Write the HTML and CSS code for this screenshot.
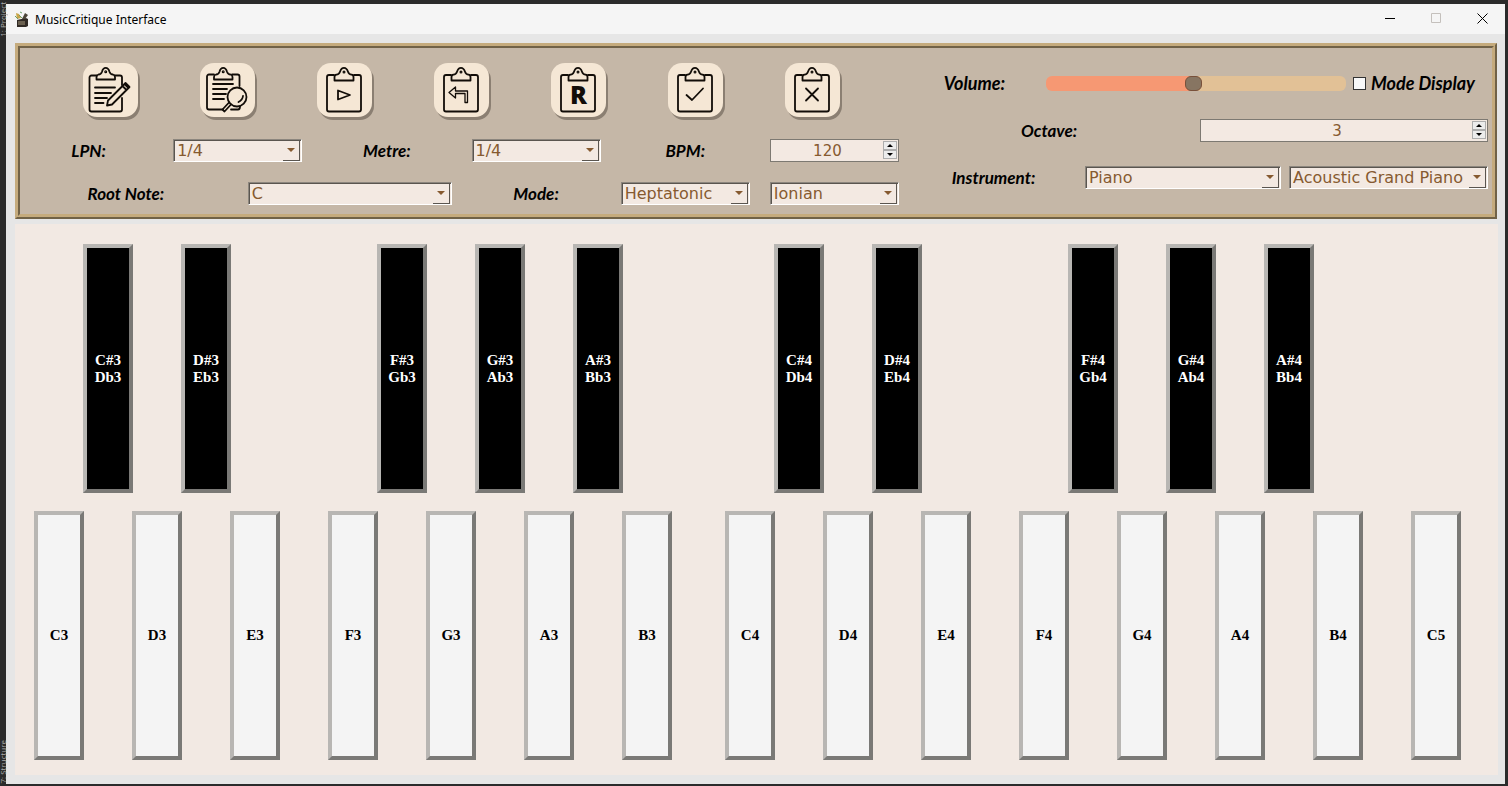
FILE: index.html
```html
<!DOCTYPE html>
<html lang="en">
<head>
  <meta charset="UTF-8" />
  <title>MusicCritique Interface</title>
  <link rel="stylesheet" href="styles.css">
</head>
<body>

  <!-- shared clipboard outline -->
  <svg class="defs" aria-hidden="true">
    <symbol id="clipboard" viewBox="0 0 55 54">
      <path d="M17 12h-5a2 2 0 0 0-2 2v32.500a2 2 0 0 0 2 2h30a2 2 0 0 0 2-2V14a2 2 0 0 0-2-2h-5" />
      <path d="M17.500 17.500V14q0-2 2-2.300q2.500-.2 3.500-3Q24.300 4.800 27 4.800T31 8.700q1 2.800 3.500 3q2 .3 2 2.300v3.500z" />
      <circle cx="27" cy="9" r=".6" />
    </symbol>
  </svg>

  <div class="side side-top">1: Project</div>
  <div class="side side-bottom">7: Structure</div>

  <div class="window">
    <header class="titlebar">
      <svg class="app-icon" viewBox="0 0 16 16">
        <path d="M3 9l9-2 2 1v7l-2 1H3z" fill="#302a25" />
        <path d="M4 11h7M4 13h7" stroke="#a5977c" />
        <path d="M8 8l3-6 3 2-3 4z" fill="#4c4539" />
        <path d="M2 2l3 1 2 4-4 1z" fill="#c9a64b" />
        <path d="M6 1l2 1M1 5l3 3M5 4l3 3" stroke="#6aa06a" />
      </svg>
      <span class="title">MusicCritique Interface</span>
      <button class="win-btn" aria-label="Minimize"><svg viewBox="0 0 11 11"><path d="M0 5.500h10" /></svg></button>
      <button class="win-btn" aria-label="Maximize" disabled><svg viewBox="0 0 11 11"><path d="M.5.5h9v9h-9z" /></svg></button>
      <button class="win-btn" aria-label="Close"><svg viewBox="0 0 11 11"><path d="M.5.5l10 10M10.500.5l-10 10" /></svg></button>
    </header>

    <section class="panel">
      <div class="left">
        <div class="tools">
          <button class="tool" aria-label="Edit">
            <svg viewBox="0 0 55 54">
              <path d="M14 12.500H8.500a2 2 0 0 0-2 2v32a2 2 0 0 0 2 2h28.500a2 2 0 0 0 2-2V35M31.500 12.500H37a2 2 0 0 1 2 2V22" />
              <path d="M13.500 16.500V14q0-2 2-2.500q2.500 0 3.500-2.800Q20 4.800 22.700 4.800T26.500 8.700q1 2.800 3.500 2.800q2 .5 2 2.500v2.500z" />
              <circle cx="22.700" cy="8.700" r=".6" />
              <path d="M12 24.500h20M12 30h16M12 35h12M12 40h8.500" />
              <path d="M25 37.500L42.500 20l4 4L29 41.500l-5 1zM39.500 23l4 4M41.500 21l4 4" />
            </svg>
          </button>
          <button class="tool" aria-label="Preview">
            <svg viewBox="0 0 55 54">
              <path d="M14 11.500H9a2 2 0 0 0-2 2v31a2 2 0 0 0 2 2h14M32 11.500h5.500a2 2 0 0 1 2 2V23M31 46.500h7q2 0 2-3" />
              <path d="M14 16.500V14q0-2 2-2.500q2.500 0 3.500-2.800Q20.500 4.800 23.200 4.800T27 8.700q1 2.800 3.500 2.800q2 .5 2 2.500v2.500z" />
              <circle cx="23.200" cy="8.700" r=".6" />
              <path d="M13 21h20M13 26h14M13 31h13M13 36h11" />
              <circle cx="37" cy="34" r="9.500" />
              <path d="M43 33q-.5 4-4.500 6M31 41.500L24.500 48.500l-2-2L29 39.500" />
            </svg>
          </button>
          <button class="tool" aria-label="Play">
            <svg viewBox="0 0 55 54"><use href="#clipboard" /><path d="M21 27.500l12 4.500-12 4.500z" /></svg>
          </button>
          <button class="tool" aria-label="Undo">
            <svg viewBox="0 0 55 54"><use href="#clipboard" /><path class="thin" d="M15 29.500l6.500-5.500v4h12v11.500h-2.500v-9h-9.500v4.500z" /></svg>
          </button>
          <button class="tool tool-letter" aria-label="Reset">
            <svg viewBox="0 0 55 54"><use href="#clipboard" /></svg><b>R</b>
          </button>
          <button class="tool" aria-label="Accept">
            <svg viewBox="0 0 55 54"><use href="#clipboard" /><path d="M18.500 32l5.500 5 11-11.500" /></svg>
          </button>
          <button class="tool" aria-label="Cancel">
            <svg viewBox="0 0 55 54"><use href="#clipboard" /><path d="M21 25.500l12 12M33 25.500l-12 12" /></svg>
          </button>
        </div>

        <div class="six">
          <label for="lpn">LPN:</label>
          <div class="combo"><select id="lpn"><option>1/4</option></select></div>
          <label for="metre">Metre:</label>
          <div class="combo"><select id="metre"><option>1/4</option></select></div>
          <label for="bpm">BPM:</label>
          <div class="spin">
            <input id="bpm" type="number" value="120">
            <button aria-label="BPM up"></button><button class="down" aria-label="BPM down"></button>
          </div>
        </div>

        <div class="six">
          <div class="root">
            <label for="root">Root Note:</label>
            <div class="combo"><select id="root"><option>C</option></select></div>
          </div>
          <label for="mode">Mode:</label>
          <div class="combo"><select id="mode"><option>Heptatonic</option></select></div>
          <div class="combo"><select aria-label="Scale"><option>Ionian</option></select></div>
        </div>
      </div>

      <div class="right">
        <div class="volume">
          <label for="volume">Volume:</label>
          <input id="volume" type="range" min="0" max="100" value="49">
          <label class="check"><input type="checkbox">Mode Display</label>
        </div>
        <div class="octave-row">
          <label for="octave">Octave:</label>
          <div class="spin">
            <input id="octave" type="number" value="3">
            <button aria-label="Octave up"></button><button class="down" aria-label="Octave down"></button>
          </div>
        </div>
        <div class="instrument">
          <label for="family">Instrument:</label>
          <div class="combo"><select id="family"><option>Piano</option></select></div>
          <div class="combo"><select aria-label="Instrument name"><option>Acoustic Grand Piano</option></select></div>
        </div>
      </div>
    </section>

    <main class="piano">
      <div class="octave first" data-octave="3"></div>
      <div class="octave last" data-octave="4"></div>
    </main>
  </div>

  <script>
    const whites = ['C', 'D', 'E', 'F', 'G', 'A', 'B'];
    const flats = { C: 'D', D: 'E', F: 'G', G: 'A', A: 'B' };

    function addKey(parent, type, text, column) {
      const key = document.createElement('button');
      key.className = 'key ' + type;
      key.innerText = text;
      key.style.gridColumn = column;
      parent.appendChild(key);
    }

    document.querySelectorAll('.octave').forEach(el => {
      const n = Number(el.dataset.octave);
      whites.forEach((note, i) => {
        addKey(el, 'white', note + n, i * 2 + 1);
        if (flats[note]) {
          addKey(el, 'black', note + '#' + n + '\n' + flats[note] + 'b' + n, i * 2 + 2);
        }
      });
      // closing C
      if (el.classList.contains('last')) addKey(el, 'white', 'C' + (n + 1), 15);
    });

    document.querySelectorAll('.spin').forEach(spin => {
      const input = spin.querySelector('input');
      const [up, down] = spin.querySelectorAll('button');
      up.addEventListener('click', () => input.stepUp());
      down.addEventListener('click', () => input.stepDown());
    });

    const volume = document.getElementById('volume');
    function paintVolume() {
      volume.style.setProperty('--value', volume.value + '%');
    }
    volume.addEventListener('input', paintVolume);
    paintVolume();
  </script>
</body>
</html>
```
FILE: styles.css
```css
* {
  box-sizing: border-box;
}
body {
  margin: 0;
  min-height: 100vh;
  padding: 4px 3px 2px 6px;
  display: flex;
  background: #2b2b2b;
  font-family: Lato, sans-serif;
}
button, input, select {
  margin: 0;
  font-family: inherit;
}
.defs {
  position: absolute;
  width: 0;
  height: 0;
}
/* strip of the window behind */
.side {
  position: absolute;
  left: 0;
  writing-mode: vertical-rl;
  transform: rotate(180deg);
  font: 8px/6px "Open Sans", sans-serif;
  color: #aaa;
}
.side-top {
  top: 2px;
}
.side-bottom {
  bottom: 2px;
}
.window {
  flex: 1;
  display: flex;
  flex-direction: column;
  background: #e6e6e6;
}
.titlebar {
  display: flex;
  align-items: center;
  height: 30px;
  padding-left: 8px;
  background: #f5f5f5;
}
.app-icon {
  width: 16px;
  height: 16px;
}
.title {
  flex: 1;
  margin-left: 5px;
  font: 12px "Noto Sans", sans-serif;
  color: #000;
}
.win-btn {
  width: 46px;
  height: 30px;
  padding: 0;
  border: none;
  background: none;
}
.win-btn svg {
  width: 11px;
  height: 11px;
  fill: none;
  stroke: #000;
}
.win-btn:disabled svg {
  stroke: #c4c0bc;
}

/* control panel */
.panel {
  margin: 9px 8px 5px 9px;
  padding: 15px 4px 9px;
  display: grid;
  grid-template-columns: 875fr 578fr;
  gap: 11px;
  border: 5px ridge #c5ab7d;
  background: #c5b7a7;
}
.left {
  display: flex;
  flex-direction: column;
  gap: 20px;
}
.tools {
  display: grid;
  grid-template-columns: repeat(7, 1fr);
  justify-items: center;
  padding: 0 28px 2px;
}
.tool {
  position: relative;
  width: 55px;
  height: 54px;
  padding: 0;
  border: none;
  border-radius: 14px;
  background: #f5e7d5;
  box-shadow: 2px 3px 0 #8b7f72;
}
.tool svg {
  display: block;
  width: 55px;
  height: 54px;
  fill: none;
  stroke: #120d08;
  stroke-width: 1.8;
  stroke-linecap: round;
  stroke-linejoin: round;
}
.tool .thin {
  stroke-width: 1.3;
}
.tool-letter b {
  position: absolute;
  inset: 18px 0 0;
  font: 800 25px/26px "Open Sans", sans-serif;
  color: #120d08;
}
.six {
  display: grid;
  grid-template-columns: repeat(6, minmax(0, 1fr));
  gap: 20px;
}
.root {
  grid-column: span 3;
  display: grid;
  grid-template-columns: 1fr 1fr;
  gap: 20px;
}
label {
  text-align: center;
  font-size: 17px;
  line-height: 23px;
  font-weight: 700;
  font-style: italic;
  color: #000;
  white-space: nowrap;
}
.combo {
  position: relative;
  min-width: 0;
}
.combo select {
  display: block;
  width: 100%;
  height: 23px;
  padding: 0 16px 0 3px;
  appearance: none;
  border: 1px solid;
  border-color: #8c867e #fff #fff #8c867e;
  border-radius: 0;
  box-shadow: inset 1px 1px 0 #5a554f;
  background: #f3e9e2;
  font: 16px/20px "DejaVu Sans", sans-serif;
  color: #865a30;
}
.combo::before {
  content: "";
  position: absolute;
  right: 2px;
  top: 2px;
  width: 16px;
  height: 19px;
  border-right: 1px solid #5a554f;
  border-bottom: 1px solid #5a554f;
  pointer-events: none;
}
.combo::after {
  content: "";
  position: absolute;
  right: 7px;
  top: 9px;
  border: 4px solid transparent;
  border-top-color: #865a30;
  border-bottom: none;
  pointer-events: none;
}
.spin {
  display: grid;
  grid-template-columns: minmax(0, 1fr) 14px;
  grid-template-rows: 9px 9px;
  height: 23px;
  padding: 1px;
  border: 1px solid #7d7972;
  background: #f3e9e2;
}
.spin input {
  grid-row: span 2;
  width: 100%;
  height: 19px;
  padding: 0;
  appearance: textfield;
  border: none;
  background: none;
  text-align: center;
  font: 15px "DejaVu Sans", sans-serif;
  color: #865a30;
}
.spin input::-webkit-inner-spin-button {
  appearance: none;
  margin: 0;
}
.spin button {
  grid-column: 2;
  display: grid;
  place-items: center;
  padding: 0;
  border: 1px solid #adadad;
  background: #ececec;
}
.spin button::before {
  content: "";
  border: 3px solid transparent;
  border-top: none;
  border-bottom-color: #000;
}
.spin .down::before {
  border-top: 3px solid #000;
  border-bottom: none;
}
.right {
  display: flex;
  flex-direction: column;
  gap: 24px;
  padding-top: 9px;
}
.volume {
  display: grid;
  grid-template-columns: 129fr 300fr 135fr;
  align-items: center;
  column-gap: 7px;
}
.volume label {
  font-size: 18px;
}
.volume input[type="range"] {
  width: 100%;
  height: 15px;
  appearance: none;
  border-radius: 6px;
  background: linear-gradient(to right, #f69873 var(--value), #e2c196 var(--value));
}
.volume input[type="range"]::-webkit-slider-thumb {
  appearance: none;
  width: 17px;
  height: 15px;
  border: 1px solid #78503a;
  border-radius: 6px;
  background: #877562;
}
.check {
  display: flex;
  align-items: center;
  gap: 5px;
}
.check input {
  width: 13px;
  height: 13px;
  appearance: none;
  border: 1px solid #333;
  background: #f8f8f8;
}
.check input:checked {
  background: #865a30;
}
.octave-row {
  display: grid;
  grid-template-columns: 278fr 288fr;
  column-gap: 12px;
}
.instrument {
  display: grid;
  grid-template-columns: 167fr 196fr 199fr;
  column-gap: 8px;
}

/* keyboard */
.piano {
  flex: 1;
  display: flex;
  gap: 5px;
  margin: 0 7px 9px 9px;
  padding: 20px 38px 15px 19px;
  background: #f2e9e3;
}
.octave {
  display: grid;
  grid-template-rows: 1fr 1fr;
  row-gap: 18px;
}
.first {
  flex: 14;
  grid-template-columns: repeat(14, minmax(0, 1fr));
}
.last {
  flex: 15;
  grid-template-columns: repeat(15, minmax(0, 1fr));
}
.key {
  width: calc(100% + 1px);
  padding: 0;
  border: 4px solid;
  border-color: #b8b6b3 #7a7976 #7a7976 #b8b6b3;
  font: bold 15px/17px "Liberation Serif", serif;
}
.white {
  grid-row: 2;
  background: #f4f4f4;
  color: #000;
}
.black {
  grid-row: 1;
  background: #000;
  color: #fff;
}
```
